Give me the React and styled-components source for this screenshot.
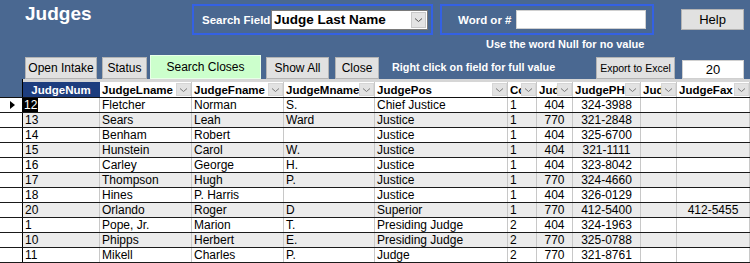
import React from 'react';
import styled, { createGlobalStyle } from 'styled-components';

const GlobalStyle = createGlobalStyle`
  html, body { margin: 0; padding: 0; background: #4a6891; }
  #root { width: 750px; }
`;

const Form = styled.div`
  width: 750px;
  height: 263px;
  overflow: hidden;
  background: #4a6891;
  font-family: "Liberation Sans", Arial, sans-serif;
  display: flex;
  flex-direction: column;
`;

const TopRow = styled.div`
  display: flex;
  align-items: flex-start;
  padding-top: 4px;
  height: 60px;
  box-sizing: border-box;
`;

const Title = styled.h1`
  margin: -1px 0 0 0;
  padding-left: 25px;
  width: 192px;
  box-sizing: border-box;
  font-size: 19px;
  line-height: 22px;
  font-weight: bold;
  color: #fff;
`;

const GroupBox = styled.div`
  display: flex;
  align-items: center;
  box-sizing: border-box;
  width: ${p => p.$w}px;
  height: 31px;
  border: 2px solid #3461e4;
`;

const Label = styled.span`
  color: #fff;
  font-weight: bold;
  font-size: 11.5px;
  margin-left: ${p => p.$ml || 0}px;
  white-space: nowrap;
`;

const Combo = styled.div`
  margin-left: auto;
  margin-right: 3px;
  width: 157px;
  height: 20px;
  box-sizing: border-box;
  background: #fff;
  border: 1px solid #7a7a7a;
  display: flex;
  align-items: center;
`;

const ComboText = styled.span`
  flex: 1;
  padding-left: 2px;
  font-size: 13.5px;
  font-weight: bold;
  color: #000;
  white-space: nowrap;
  overflow: hidden;
`;

const ComboButton = styled.div`
  width: 15px;
  height: 16px;
  margin-right: 1px;
  background: #e3e3e3;
  border: 1px solid #c8c8c8;
  box-sizing: border-box;
  display: flex;
  align-items: center;
  justify-content: center;
`;

const WordCol = styled.div`
  margin-left: 7px;
  width: 214px;
  display: flex;
  flex-direction: column;
`;

const TextInput = styled.div`
  margin-left: ${p => (p.$ml != null ? `${p.$ml}px` : 'auto')};
  margin-right: ${p => p.$mr ?? 6}px;
  width: ${p => p.$w}px;
  height: ${p => p.$h}px;
  background: #fff;
  box-sizing: border-box;
  border: 1px solid #d0d0d0;
  font-size: 13px;
  color: #000;
  display: flex;
  align-items: center;
  justify-content: center;
  flex-shrink: 0;
`;

const Hint = styled.div`
  margin-top: 3px;
  padding-left: 46px;
  color: #fff;
  font-weight: bold;
  font-size: 11px;
  line-height: 13px;
  white-space: nowrap;
`;

const Button = styled.button`
  font-family: "Liberation Sans", Arial, sans-serif;
  font-size: ${p => p.$fs || 12}px;
  color: #000;
  background: ${p => (p.$green ? '#ccffcc' : '#e1e1e1')};
  border: 1px solid ${p => (p.$green ? '#e8ffe8' : '#b4b4b4')};
  width: ${p => p.$w}px;
  height: ${p => p.$h || 22}px;
  margin: ${p => p.$mt || 0}px 0 0 ${p => p.$ml || 0}px;
  padding: 0;
  box-sizing: border-box;
  flex-shrink: 0;
  white-space: nowrap;
`;

const ButtonRow = styled.div`
  display: flex;
  align-items: flex-end;
  height: 24px;
  padding-left: 25px;
`;

const RowLabel = styled.span`
  align-self: center;
  margin-left: 13px;
  color: #fff;
  font-weight: bold;
  font-size: 10.8px;
  white-space: nowrap;
`;

const RightGroup = styled.div`
  margin-left: auto;
  display: flex;
  align-items: flex-end;
  height: 24px;
`;

const Sheet = styled.div`
  flex: 1;
  display: flex;
  flex-direction: column;
`;

const Strip = styled.div`
  margin-left: 22px;
  height: 3px;
  background: #d6d6d6;
  border-left: 1px solid #000;
`;

const COLS = '23px 77px 92px 92px 91px 133px 29px 36px 68px 36px 1fr';

const HeaderRow = styled.div`
  display: grid;
  grid-template-columns: ${COLS};
  height: 16px;
  border-bottom: 1px solid #111;
  box-sizing: border-box;
`;

const Corner = styled.div`
  border-right: 1px solid #000;
`;

const HeadCell = styled.div`
  display: flex;
  align-items: center;
  background: ${p => (p.$sel ? '#1d3d7e' : '#fff')};
  color: ${p => (p.$sel ? '#fff' : '#000')};
  justify-content: ${p => (p.$sel ? 'center' : 'flex-start')};
  border-right: 1px solid ${p => (p.$sel ? '#1d3d7e' : '#c8c8c8')};
  font-weight: bold;
  font-size: 11.5px;
  overflow: hidden;
  min-width: 0;
`;

const HeadText = styled.span`
  flex: 1;
  min-width: 0;
  padding-left: 2px;
  overflow: hidden;
  white-space: nowrap;
  text-overflow: clip;
  ${p => p.$sel && 'flex: none; padding-left: 0;'}
`;

const DropBtn = styled.div`
  width: 15px;
  height: 13px;
  flex-shrink: 0;
  background: #e2e2e2;
  border: 1px solid #d6d6d6;
  box-sizing: border-box;
  display: flex;
  align-items: center;
  justify-content: center;
`;

const DataRow = styled.div`
  display: grid;
  grid-template-columns: ${COLS};
  height: 15px;
  border-bottom: 1px solid #1a1a1a;
  box-sizing: border-box;
  background: ${p => (p.$alt ? '#ebebeb' : '#fff')};
`;

const Selector = styled.div`
  background: #fff;
  border-right: 1px solid #000;
`;

const Cell = styled.div`
  border-right: 1px solid #c8c8c8;
  font-size: 12px;
  line-height: 14px;
  color: #000;
  padding-left: 2px;
  text-align: ${p => p.$align || 'left'};
  white-space: nowrap;
  overflow: hidden;
  min-width: 0;
  ${p => p.$align === 'center' && 'padding-left: 0;'}
`;

const Selected = styled.span`
  background: #000;
  color: #fff;
  margin-left: -2px;
  padding: 0 1px;
`;

const Chevron = ({ color = '#7a7a7a' }) => (
  <svg width="9" height="6" viewBox="0 0 9 6">
    <polyline points="1,1.5 4.5,4.5 8,1.5" fill="none" stroke={color} strokeWidth="1" />
  </svg>
);

const Arrow = () => (
  <svg width="22" height="14" viewBox="0 0 22 14" style={{ display: 'block' }}>
    <polygon points="10,3 15,7 10,11" fill="#000" />
  </svg>
);

const headers = [
  { label: 'JudgeNum', sel: true },
  { label: 'JudgeLname' },
  { label: 'JudgeFname' },
  { label: 'JudgeMname' },
  { label: 'JudgePos' },
  { label: 'CourtLevel' },
  { label: 'JudgeArea' },
  { label: 'JudgePHONE' },
  { label: 'JudgeExt' },
  { label: 'JudgeFax' },
];

const rows = [
  ['12', 'Fletcher', 'Norman', 'S.', 'Chief Justice', '1', '404', '324-3988', '', ''],
  ['13', 'Sears', 'Leah', 'Ward', 'Justice', '1', '770', '321-2848', '', ''],
  ['14', 'Benham', 'Robert', '', 'Justice', '1', '404', '325-6700', '', ''],
  ['15', 'Hunstein', 'Carol', 'W.', 'Justice', '1', '404', '321-1111', '', ''],
  ['16', 'Carley', 'George', 'H.', 'Justice', '1', '404', '323-8042', '', ''],
  ['17', 'Thompson', 'Hugh', 'P.', 'Justice', '1', '770', '324-4660', '', ''],
  ['18', 'Hines', 'P. Harris', '', 'Justice', '1', '404', '326-0129', '', ''],
  ['20', 'Orlando', 'Roger', 'D', 'Superior', '1', '770', '412-5400', '', '412-5455'],
  ['1', 'Pope, Jr.', 'Marion', 'T.', 'Presiding Judge', '2', '404', '324-1963', '', ''],
  ['10', 'Phipps', 'Herbert', 'E.', 'Presiding Judge', '2', '770', '325-0788', '', ''],
  ['11', 'Mikell', 'Charles', 'P.', 'Judge', '2', '770', '321-8761', '', ''],
];

const align = ['left', 'left', 'left', 'left', 'left', 'left', 'center', 'center', 'center', 'center'];

export default function App() {
  return (
    <>
      <GlobalStyle />
      <Form>
        <TopRow>
          <Title>Judges</Title>
          <GroupBox $w={241}>
            <Label $ml={8}>Search Field</Label>
            <Combo>
              <ComboText>Judge Last Name</ComboText>
              <ComboButton><Chevron color="#555" /></ComboButton>
            </Combo>
          </GroupBox>
          <WordCol>
            <GroupBox $w={214}>
              <Label $ml={16}>Word or #</Label>
              <TextInput $w={130} $h={19} />
            </GroupBox>
            <Hint>Use the word Null for no value</Hint>
          </WordCol>
          <Button $w={63} $h={21} $ml={27} $mt={5} $fs={13}>Help</Button>
        </TopRow>
        <ButtonRow>
          <Button $w={72}>Open Intake</Button>
          <Button $w={45} $ml={5}>Status</Button>
          <Button $w={111} $h={24} $ml={3} $green>Search Closes</Button>
          <Button $w={63} $ml={5}>Show All</Button>
          <Button $w={44} $ml={6}>Close</Button>
          <RowLabel>Right click on field for full value</RowLabel>
          <RightGroup>
            <Button $w={79} $fs={10.5}>Export to Excel</Button>
            <TextInput $w={62} $h={19} $ml={7} $mr={6}>20</TextInput>
          </RightGroup>
        </ButtonRow>
        <Sheet>
          <Strip />
          <HeaderRow>
            <Corner />
            {headers.map(h => (
              <HeadCell key={h.label} $sel={h.sel}>
                <HeadText $sel={h.sel}>{h.label}</HeadText>
                {!h.sel && <DropBtn><Chevron /></DropBtn>}
              </HeadCell>
            ))}
          </HeaderRow>
          {rows.map((r, i) => (
            <DataRow key={i} $alt={i % 2 === 1}>
              <Selector>{i === 0 && <Arrow />}</Selector>
              {r.map((v, j) => (
                <Cell key={j} $align={align[j]}>
                  {i === 0 && j === 0 ? <Selected>{v}</Selected> : v}
                </Cell>
              ))}
            </DataRow>
          ))}
        </Sheet>
      </Form>
    </>
  );
}
